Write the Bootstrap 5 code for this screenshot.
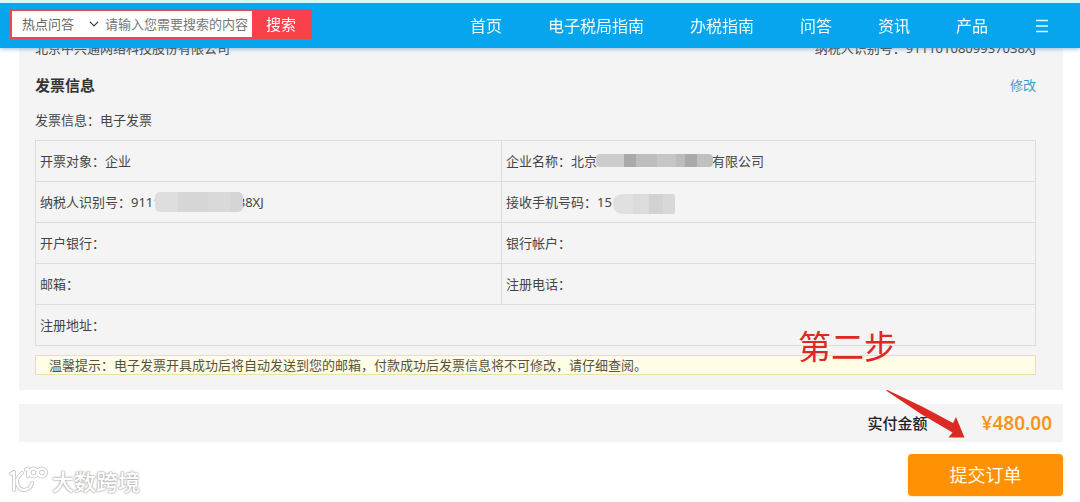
<!DOCTYPE html>
<html lang="zh-CN">
<head>
<meta charset="utf-8">
<meta name="viewport" content="width=device-width, initial-scale=1">
<title>提交订单</title>
<link href="https://cdn.jsdelivr.net/npm/bootstrap@5.3.0/dist/css/bootstrap.min.css" rel="stylesheet">
<style>
  body { font-family: "Noto Sans", "Noto Sans CJK SC", sans-serif; font-size: 13px; line-height: 20px; color: #444; background: #fff; }
  .topbar { background: #06a5ee; border-top: 3px solid #dcf8fd; height: 48px; padding: 0 30px 0 10px; box-shadow: 0 1px 4px rgba(80,150,200,.6); }
  .search { border: 2px solid #ee4650; background: #fff; height: 30px; width: 302px; margin-top: -3px; }
  .search .form-select, .search .form-control { border: 0; border-radius: 0; font-size: 13px; line-height: 20px; padding: 0; color: #666; box-shadow: none; min-height: 0; background-color: #fff; }
  .search .form-select { width: 90px; flex: none; padding-left: 10px; background-size: 12px 10px; background-position: right 2px center; }
  .search .form-control { padding-left: 3px; }
  .search .form-control::placeholder { color: #777; opacity: 1; }
  .search .btn { background: #f9404b; color: #fff; border: 0; border-radius: 0; font-size: 15px; line-height: 20px; padding: 0; width: 58px; flex: none; }
  .topnav { gap: 46px; }
  .topnav a, .topnav button { color: #f2fdff; font-size: 16px; line-height: 24px; text-decoration: none; white-space: nowrap; }
  .page { padding: 38px 17px 0 19px; }
  .panel { background: #f4f4f4; }
  .invoice { padding: 0 27px 15px 16px; }
  .title-row { margin-top: 17px; }
  .section-title { font-size: 15px; line-height: 20px; font-weight: 700; color: #333; margin: 0; }
  .invoice-kind { margin-top: 15px; }
  .edit { color: #3b9cc4; text-decoration: none; }
  .info { margin: 10px 0 9px; border: 1px solid #dcdcdc; table-layout: fixed; color: #444; --bs-table-bg: transparent; }
  .info td { border: 1px solid #dcdcdc; padding: 10px 4px; height: 41px; line-height: 20px; color: #444; }
  .info td:first-child { width: 46.6%; }
  .tip { background: #fffde4; border: 1px solid #e9e0ab; padding: 0 13px; line-height: 18px; color: #55523f; }
  .masked { display: inline-block; vertical-align: middle; position: relative; }
  .mask-tax { width: 88px; height: 20px; margin: -6px -5px -2px -6px; border-radius: 5px; background: linear-gradient(90deg,#dedede 0 26%,#d6d6d6 26% 60%,#d9d9d9 60% 85%,#d5d5d5 85%); }
  .mask-name { width: 117px; height: 13px; margin: -4px -1px 0 -1px; border-radius: 4px; background: linear-gradient(90deg,#ccc 0 24%,#aaa 24% 34%,#bdbdbd 34% 52%,#c6c6c6 52% 68%,#bcbcbc 68% 76%,#aaa 76% 86%,#c0c0c0 86%); }
  .mask-phone { width: 62px; height: 20px; margin: -2px 0 -2px 1px; border-radius: 9px 2px 2px 9px; background: linear-gradient(90deg,#e0e0e0 0 32%,#dcdcdc 32% 58%,#d2d2d2 58% 80%,#d8d8d8 80%); }
  .total { margin-top: 14px; height: 38px; padding: 0 11px; }
  .total-label { font-size: 15px; font-weight: 500; color: #222; }
  .price { font-size: 19px; line-height: 28px; font-weight: 600; color: #f79420; margin-left: 54px; }
  .step-note { right: 166px; top: -77px; font-size: 33px; line-height: 40px; color: #dc2a22; white-space: nowrap; }
  .step-arrow { right: 98px; top: -15px; }
  .submit { width: 155px; height: 42px; margin-top: 12px; padding: 0; border: 0; border-radius: 4px; background: #ff9104; color: #fffbe8; font-size: 18px; line-height: 26px; box-shadow: 0 1px 4px rgba(255,210,90,.5); }
  .brand { margin: 23px 0 0 -11px; gap: 4px; }
  .brand-name { color: #fff; font-size: 22px; line-height: 32px; font-weight: 500; text-shadow: 0 0 2px #aaa, 0 0 2px #aaa, 0 0 1px #bbb; }
</style>
</head>
<body>
<header class="topbar fixed-top d-flex align-items-center justify-content-between">
  <form class="search d-flex align-items-stretch" role="search">
    <select class="form-select" aria-label="搜索分类"><option>热点问答</option></select>
    <input class="form-control" type="text" aria-label="搜索内容" placeholder="请输入您需要搜索的内容">
    <button class="btn" type="button">搜索</button>
  </form>
  <nav class="topnav d-flex align-items-center" aria-label="主导航">
    <a href="#">首页</a>
    <a href="#">电子税局指南</a>
    <a href="#">办税指南</a>
    <a href="#">问答</a>
    <a href="#">资讯</a>
    <a href="#">产品</a>
    <button class="btn p-0 border-0 d-flex" type="button" aria-label="菜单">
      <svg width="16" height="16" viewBox="0 0 16 16" fill="none" stroke="#e8fbff" stroke-width="1.6"><path d="M2 2.500h12M2 8h12M2 13.500h12"/></svg>
    </button>
  </nav>
</header>

<main class="page">
  <section class="panel invoice">
    <div class="d-flex justify-content-between">
      <span>北京中兴通网络科技股份有限公司</span>
      <span>纳税人识别号：9111010809937038XJ</span>
    </div>
    <div class="title-row d-flex justify-content-between align-items-center">
      <h2 class="section-title">发票信息</h2>
      <a class="edit" href="#">修改</a>
    </div>
    <div class="invoice-kind">发票信息：电子发票</div>
    <table class="table info">
      <tbody>
        <tr>
          <td>开票对象：企业</td>
          <td>企业名称：北京<span class="masked mask-name"></span>有限公司</td>
        </tr>
        <tr>
          <td>纳税人识别号：9111<span class="masked mask-tax"></span>38XJ</td>
          <td>接收手机号码：15<span class="masked mask-phone"></span></td>
        </tr>
        <tr><td>开户银行：</td><td>银行帐户：</td></tr>
        <tr><td>邮箱：</td><td>注册电话：</td></tr>
        <tr><td colspan="2">注册地址：</td></tr>
      </tbody>
    </table>
    <div class="tip">温馨提示：电子发票开具成功后将自动发送到您的邮箱，付款成功后发票信息将不可修改，请仔细查阅。</div>
  </section>

  <section class="panel total position-relative d-flex align-items-center justify-content-end">
    <span class="total-label">实付金额</span>
    <span class="price">¥480.00</span>
    <span class="step-note position-absolute">第二步</span>
    <svg class="step-arrow position-absolute" width="80" height="50" viewBox="0 0 80 50" fill="#dc2a22" aria-hidden="true"><path d="M1 1.5 2.5 1 38 18 68 34 71 28 79.500 48.500 63.500 48.500 67.500 43.500 36 25Z"/></svg>
  </section>

  <div class="d-flex justify-content-between align-items-start">
    <div class="brand d-flex align-items-center">
      <svg width="40" height="32" viewBox="0 0 40 32" fill="none" stroke-linecap="round" stroke-linejoin="round" aria-hidden="true">
        <g stroke="#c4c4c4" stroke-width="4"><path d="M3 9 6 7v18M14 8C9 12 8 17 10 21c3 6 12 5 14-3M18 4.500l2-1v8"/><circle cx="25.500" cy="7.500" r="4"/><circle cx="34" cy="7.500" r="4"/></g>
        <g stroke="#fff" stroke-width="2.400"><path d="M3 9 6 7v18M14 8C9 12 8 17 10 21c3 6 12 5 14-3M18 4.500l2-1v8"/><circle cx="25.500" cy="7.500" r="4"/><circle cx="34" cy="7.500" r="4"/></g>
      </svg>
      <span class="brand-name">大数跨境</span>
    </div>
    <button class="btn submit" type="button">提交订单</button>
  </div>
</main>
<script src="https://cdn.jsdelivr.net/npm/bootstrap@5.3.0/dist/js/bootstrap.bundle.min.js"></script>
</body>
</html>
